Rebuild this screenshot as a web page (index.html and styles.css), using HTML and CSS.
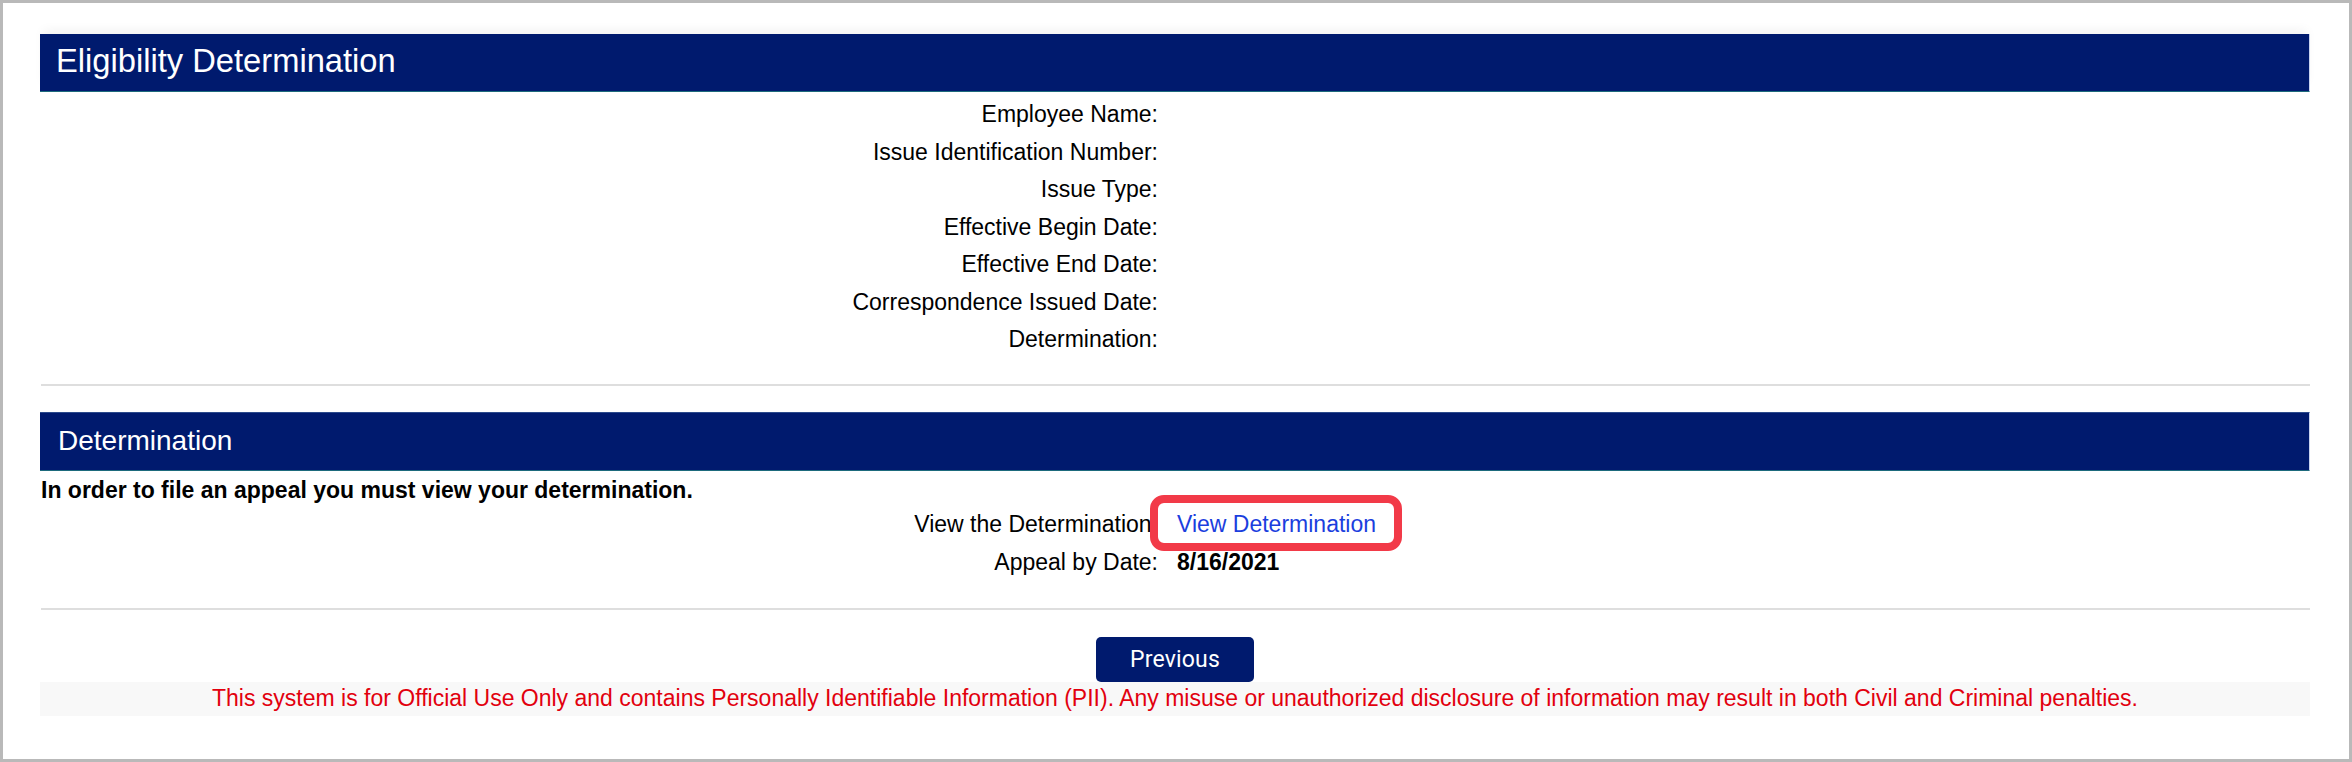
FILE: index.html
```html
<!DOCTYPE html>
<html lang="en">
<head>
<meta charset="utf-8">
<title>Eligibility Determination</title>
<link rel="stylesheet" href="styles.css">
</head>
<body>
<div class="frame">
  <div class="content">
    <section class="section">
      <h1 class="bar bar-main">Eligibility Determination</h1>
      <div class="fields">
        <div class="label">Employee Name:</div><div class="value"></div>
        <div class="label">Issue Identification Number:</div><div class="value"></div>
        <div class="label">Issue Type:</div><div class="value"></div>
        <div class="label">Effective Begin Date:</div><div class="value"></div>
        <div class="label">Effective End Date:</div><div class="value"></div>
        <div class="label">Correspondence Issued Date:</div><div class="value"></div>
        <div class="label">Determination:</div><div class="value"></div>
      </div>
    </section>
    <hr class="divider">
    <section class="section">
      <h2 class="bar bar-sub">Determination</h2>
      <p class="notice">In order to file an appeal you must view your determination.</p>
      <div class="fields fields-sub">
        <div class="label">View the Determination:</div>
        <div class="value value-link"><a class="link" href="#">View Determination</a><span class="highlight"></span></div>
        <div class="label">Appeal by Date:</div><div class="value value-bold">8/16/2021</div>
      </div>
    </section>
    <hr class="divider divider-end">
    <div class="actions">
      <button class="btn" type="button">Previous</button>
    </div>
    <div class="footer">This system is for Official Use Only and contains Personally Identifiable Information (PII). Any misuse or unauthorized disclosure of information may result in both Civil and Criminal penalties.</div>
  </div>
</div>
</body>
</html>
```

FILE: styles.css
```css
* { box-sizing: border-box; }

html, body {
  margin: 0;
  padding: 0;
  background: #ffffff;
}

body {
  font-family: "Liberation Sans", Arial, sans-serif;
  color: #000;
}

.frame {
  width: 2352px;
  height: 762px;
  border: 3px solid #b9b9b9;
  background: #fff;
  padding: 31px 39px 0 37px;
}

.content {
  display: flex;
  flex-direction: column;
}

.bar {
  margin: 0;
  background: #001a6e;
  color: #fff;
  font-weight: normal;
  display: flex;
  align-items: center;
  border-bottom: 1px solid #1d6a7c;
  border-right: 1px solid #c9d3ef;
}

.bar-main {
  height: 58px;
  font-size: 32.7px;
  padding: 0 0 3px 16px;
  box-shadow: 0 -7px 10px -3px rgba(0, 0, 0, 0.05);
}

.bar-sub {
  height: 59px;
  font-size: 28px;
  padding: 0 0 0 18px;
  border-top: 1px solid #2b4a8c;
}

.fields {
  display: grid;
  grid-template-columns: 1118px 1fr;
  column-gap: 19px;
  font-size: 23px;
  line-height: 37.5px;
}

.fields-sub { line-height: 38.5px; }

.bar-main + .fields { margin-top: 4px; }

.label {
  text-align: right;
  white-space: nowrap;
}

.value { min-height: 37.5px; }

.value-bold { font-weight: bold; }

.value-link { position: relative; }

.link {
  color: #1b3ede;
  text-decoration: none;
}

.highlight {
  position: absolute;
  left: -27px;
  top: -10px;
  width: 252px;
  height: 56px;
  border: 8px solid #f23a48;
  border-radius: 14px;
}

.notice {
  margin: 6px 0 2px 1px;
  font-size: 23px;
  line-height: 26px;
  font-weight: bold;
}

.divider {
  margin: 25px 0 0 1px;
  border: 0;
  height: 2px;
  background: #dedede;
}

.divider-end { margin-top: 26px; }

.divider + .section { margin-top: 26px; }

.actions {
  display: flex;
  justify-content: center;
  margin-top: 27px;
}

.btn {
  width: 158px;
  height: 45px;
  background: #001a6e;
  color: #fff;
  border: 0;
  border-radius: 5px;
  font-family: Roboto, "Liberation Sans", sans-serif;
  font-size: 23px;
  letter-spacing: 0.2px;
  padding: 0;
}

.footer {
  height: 34px;
  background: #f8f8f8;
  color: #e2000e;
  font-size: 23px;
  line-height: 32px;
  text-align: center;
  white-space: nowrap;
}
```
